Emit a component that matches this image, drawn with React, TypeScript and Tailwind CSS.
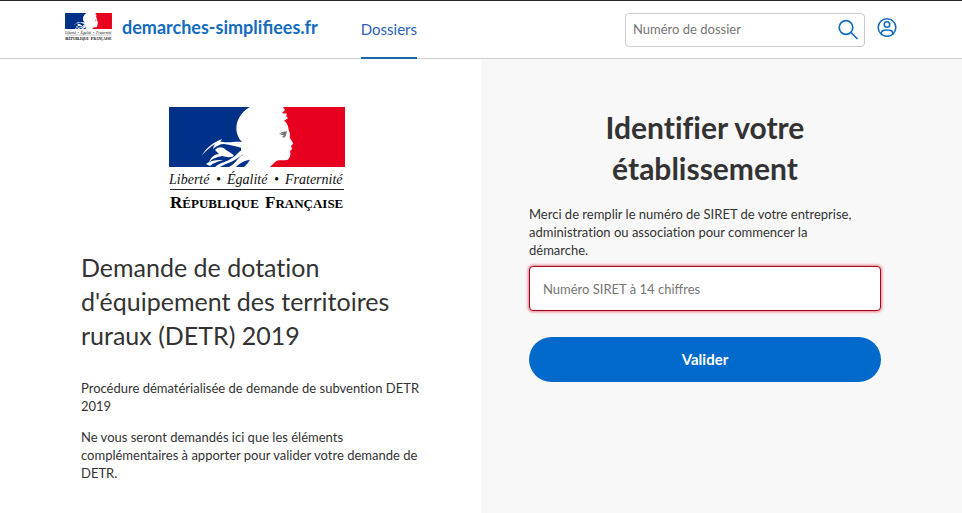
import React from "react";

function Marianne({ className }: { className: string }) {
  return (
    <svg viewBox="0 0 176 105" className={className} role="img" aria-label="République Française">
      <rect width="176" height="60" fill="#fff" />
      <path
        fill="#003189"
        d="M0 0H81C75 3 70 9 68 16C66 24 69 31 73 35L72 37V45C73 49 77 52 81 53C79 56 77 58 75 60H0Z"
      />
      <g fill="#fff">
        <path d="M33 48C38 40 45 35 53 32L51 35C43 38 38 43 33 48Z" />
        <path d="M44 42C45 37 49 33 54 35C61 36 67 34 73 35L73 41C67 39 61 38 55 37C51 37 47 39 44 42Z" />
        <path d="M46 43C50 39 54 40 57 43C60 45 63 46 65 49C61 51 57 50 53 49C49 50 44 51 40 55C42 50 46 47 50 47Z" />
        <path d="M37 57C42 53 48 53 54 53C48 55 44 56 41 59Z" />
        <path d="M46 60C52 55 58 55 63 51C67 49 69 45 73 43V48C69 51 66 53 62 55C57 57 54 58 51 60Z" />
        <path d="M60 60C66 57 68 52 73 48L81 53C75 53 70 57 67 60Z" />
      </g>
      <path
        fill="#e8001f"
        d="M176 0H114L116 3L113 6C115 7 117 6 118 7L117 9L119 11L115 14C119 16 119 20 120 24C122 28 120 29 121 31L124 36C124 38 122 38 122 39L123 42L121 44C122 47 121 52 118 53C113 54 108 52 105 56L101 60H176Z"
      />
      <path fill="#777" d="M110 27C113 24 116 25 118 24L117 28C116 31 115 31 113 30L115 28L111 28L114 26Z" />
      <text x="0" y="77" fontFamily="'Liberation Serif', serif" fontStyle="italic" fontSize="14" fill="#111">
        Liberté
        <tspan x="47">•</tspan>
        <tspan x="58">Égalité</tspan>
        <tspan x="105">•</tspan>
        <tspan x="116">Fraternité</tspan>
      </text>
      <path d="M1 82.500H175" stroke="#222" strokeWidth="1" />
      <text x="1" y="101" fontFamily="'Liberation Serif', serif" fontWeight="bold" fontSize="17" fill="#000">
        R<tspan fontSize="13">ÉPUBLIQUE</tspan>
        <tspan x="96">F</tspan><tspan fontSize="13">RANÇAISE</tspan>
      </text>
    </svg>
  );
}

export default function App() {
  return (
    <div className="flex min-h-screen flex-col bg-white font-['Lato',sans-serif] text-[13px] text-[#333]">
      <header className="h-[59px] border-t border-b border-t-[#222] border-b-[#ccc]">
        <div className="mx-auto flex h-full max-w-[832px] items-start">
          <a href="#accueil" className="flex items-center gap-[10px] pt-3">
            <Marianne className="h-7 w-[47px]" />
            <span className="text-lg leading-7 font-bold text-[#136cc0]">demarches-simplifiees.fr</span>
          </a>
          <nav className="ml-[43px] h-[58px]">
            <a href="#dossiers" className="block h-full border-b-2 border-[#176aa3] pt-4 text-[15px] leading-6 text-[#2b5fb8]">
              Dossiers
            </a>
          </nav>
          <form className="mt-3 ml-auto flex h-[34px] w-60 items-center rounded border border-[#ccc] bg-white pr-1 pl-[7px]">
            <input aria-label="Numéro de dossier" placeholder="Numéro de dossier" className="min-w-0 flex-1 text-[13px] outline-none placeholder:text-[#757575]" />
            <button type="button" aria-label="Rechercher" className="p-px">
              <svg viewBox="0 0 22 22" className="size-[22px]" fill="none" stroke="#136cc0" strokeWidth="1.700" strokeLinecap="round">
                <circle cx="9" cy="8.500" r="6.800" />
                <path d="M14 13.500L20 19.500" />
              </svg>
            </button>
          </form>
          <button type="button" aria-label="Mon compte" className="mt-4 ml-3">
            <svg viewBox="0 0 20 20" className="size-5" fill="none" stroke="#136cc0" strokeWidth="1.600">
              <circle cx="10" cy="10.500" r="8.800" />
              <circle cx="10" cy="7.500" r="2.700" />
              <path d="M4.400 17.200C3.500 14.300 6 13 10 13S16.500 14.300 15.600 17.200" />
            </svg>
          </button>
        </div>
      </header>
      <main className="grid flex-1 grid-cols-2">
        <section className="px-12 pt-12">
          <div className="ml-auto max-w-[352px]">
            <Marianne className="mx-auto h-[105px] w-44" />
            <h1 className="mt-[38px] text-[25px] leading-[34px] [font-variant-ligatures:none]">
              Demande de dotation d'équipement des territoires ruraux (DETR) 2019
            </h1>
            <p className="mt-[27px] leading-[18px] [font-variant-ligatures:none]">Procédure dématérialisée de demande de subvention DETR 2019</p>
            <p className="mt-[13px] leading-[18px]">Ne vous seront demandés ici que les éléments complémentaires à apporter pour valider votre demande de DETR.</p>
          </div>
        </section>
        <section className="bg-[#f8f8f8] px-12 pt-12">
          <form className="max-w-[352px]">
            <h2 className="text-center text-[30px] leading-[41px] font-bold [font-variant-ligatures:none]">
              Identifier votre
              <br />
              établissement
            </h2>
            <label htmlFor="siret" className="mt-4 block leading-[18px] [font-variant-ligatures:none]">
              Merci de remplir le numéro de SIRET de votre entreprise, administration ou association pour commencer la
              <br />
              démarche.
            </label>
            <input
              id="siret"
              placeholder="Numéro SIRET à 14 chiffres"
              className="mt-[7px] block h-[45px] w-full rounded border border-[#a1081a] bg-white px-[13px] text-[13px] shadow-[0_0_3px_1px_#e8798a] outline-none placeholder:text-[#757575]"
            />
            <button type="button" className="mt-[26px] block h-[45px] w-full rounded-full bg-[#0069cc] text-[15px] font-bold text-white">
              Valider
            </button>
          </form>
        </section>
      </main>
    </div>
  );
}
